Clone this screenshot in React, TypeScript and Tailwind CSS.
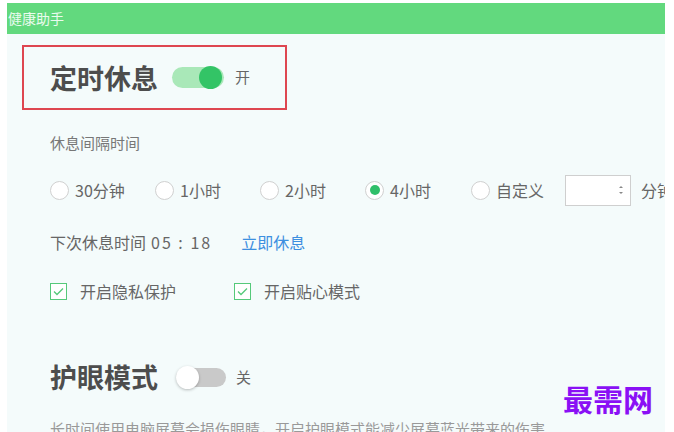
import React from "react";

const font = { fontFamily: '"Noto Sans CJK SC", "Noto Sans", sans-serif' };

function Toggle({ on }: { on: boolean }) {
  return on ? (
    <div className="relative h-[21px] w-[52px] rounded-full bg-[#a9e8b8]">
      <div className="absolute right-[2px] top-[-1px] h-[23px] w-[23px] rounded-full bg-[#33c466]" />
    </div>
  ) : (
    <div className="relative h-[19px] w-[50px] rounded-full bg-[#c9c9c9]">
      <div className="absolute left-[0px] top-[-2px] h-[23px] w-[23px] rounded-full bg-white shadow-[0_1px_3px_rgba(0,0,0,0.25)]" />
    </div>
  );
}

function Radio({ label, checked, width }: { label: string; checked?: boolean; width: string }) {
  return (
    <div className={`flex shrink-0 items-center ${width}`}>
      <span className="flex h-[19px] w-[19px] items-center justify-center rounded-full border border-[#d0d0d0] bg-white">
        {checked && <span className="h-[10px] w-[10px] rounded-full bg-[#2fbf6a]" />}
      </span>
      <span className="ml-[6px] text-[16px] text-[#666]">{label}</span>
    </div>
  );
}

function Check({ label }: { label: string }) {
  return (
    <div className="flex items-center">
      <span className="flex h-[17px] w-[17px] items-center justify-center border border-[#55c97a] bg-white">
        <svg width="11" height="9" viewBox="0 0 11 9" fill="none">
          <path d="M1 4.5 L4 7.5 L10 1.5" stroke="#55c97a" strokeWidth="1.3" />
        </svg>
      </span>
      <span className="ml-[13px] text-[16px] text-[#666]">{label}</span>
    </div>
  );
}

export default function App() {
  return (
    <div className="relative h-[432px] w-[674px] overflow-hidden bg-white pl-[7px] pt-[3px]" style={font}>
      <div className="h-[429px] w-[658px] overflow-hidden bg-[#f4fbfb]">
        <div className="flex h-[31px] items-center bg-[#62d97e] pl-[1px] text-[14px] text-[#eafbee]">
          健康助手
        </div>

        <div className="ml-[15px] mt-[11px] flex h-[65px] w-[265px] items-center border-2 border-[#de4650] pl-[26px]">
          <span className="text-[27px] font-bold leading-[36px] text-[#4d4d4d]">定时休息</span>
          <div className="ml-[14px]">
            <Toggle on />
          </div>
          <span className="ml-[11px] text-[15px] text-[#666]">开</span>
        </div>

        <div className="px-[43px]">
          <div className="mt-[21px] text-[15px] leading-[24px] text-[#777]">休息间隔时间</div>

          <div className="mt-[20px] flex h-[30px] items-center">
            <Radio label="30分钟" width="w-[105px]" />
            <Radio label="1小时" width="w-[105px]" />
            <Radio label="2小时" width="w-[105px]" />
            <Radio label="4小时" checked width="w-[106px]" />
            <Radio label="自定义" width="w-[94px]" />
            <div className="flex h-[31px] w-[66px] shrink-0 items-center justify-end border border-[#cfcfcf] bg-white pr-[6px]">
              <svg width="6" height="12" viewBox="0 0 6 12">
                <path d="M1 4 L3 2 L5 4 Z M1 8 L3 10 L5 8 Z" fill="#888" />
              </svg>
            </div>
            <span className="ml-[10px] shrink-0 whitespace-nowrap text-[16px] text-[#666]">分钟</span>
          </div>

          <div className="mt-[25px] flex items-center text-[16px] leading-[24px] text-[#666]">
            <span>下次休息时间</span>
            <span className="ml-[5px] tracking-[2px]">05 : 18</span>
            <span className="ml-[29px] text-[#3d8fe0]">立即休息</span>
          </div>

          <div className="mt-[25px] flex h-[24px] items-center">
            <div className="w-[184px]">
              <Check label="开启隐私保护" />
            </div>
            <Check label="开启贴心模式" />
          </div>

          <div className="mt-[56px] flex items-center">
            <span className="text-[27px] font-bold leading-[36px] text-[#4d4d4d]">护眼模式</span>
            <div className="ml-[18px]">
              <Toggle on={false} />
            </div>
            <span className="ml-[10px] text-[15px] text-[#666]">关</span>
          </div>

          <div className="mt-[22px] whitespace-nowrap text-[15px] leading-[24px] text-[#999]">
            长时间使用电脑屏幕会损伤眼睛，开启护眼模式能减少屏幕蓝光带来的伤害
          </div>
        </div>
      </div>

      <div
        className="absolute left-[563px] top-[383px] text-[30px] font-bold leading-none text-[#8a10f5]"
        style={{ fontFamily: '"Noto Sans CJK SC", sans-serif' }}
      >
        最需网
      </div>
    </div>
  );
}
